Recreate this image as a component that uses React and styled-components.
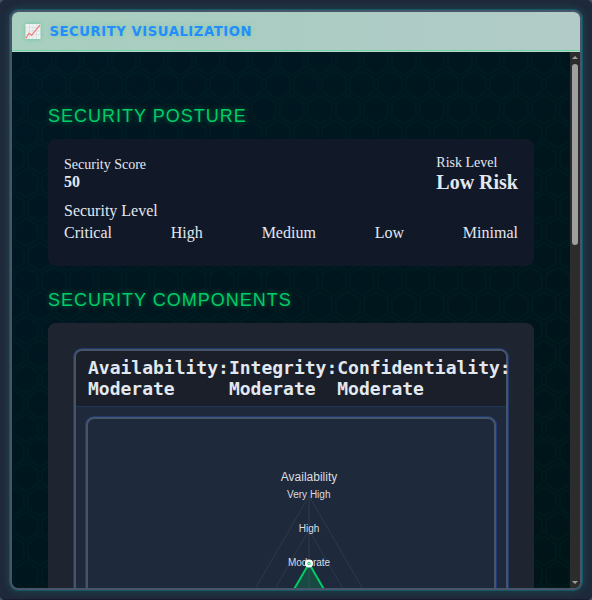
import React from 'react';
import styled, { createGlobalStyle } from 'styled-components';

const hexPath =
  'M13.99 9.25l13 7.5v15l-13 7.5L1 31.75v-15l12.99-7.5zM3 17.9v12.7l10.99 6.34 11-6.35V17.9l-11-6.34L3 17.9zM0 15l12.98-7.5V0h-2v6.35L0 12.69v2.3zm0 18.5L12.98 41v8h-2v-6.85L0 35.81v-2.3zM15 0v7.5L27.99 15H28v-2.31h-.01L17 6.35V0h-2zm0 49v-8l12.99-7.5H28v2.31h-.01L17 42.15V49h-2z';
const hexTile = encodeURIComponent(
  `<svg xmlns="http://www.w3.org/2000/svg" width="28" height="49"><path fill="#00cc66" fill-opacity="0.025" fill-rule="evenodd" d="${hexPath}"/></svg>`
);

const GlobalStyle = createGlobalStyle`
  * { box-sizing: border-box; }
  body { margin: 0; background: #475569; overflow: hidden; }
`;

const Page = styled.main`
  height: 600px;
  padding: 10px;
  border-radius: 5px;
  background: #1e293b;
  box-shadow: inset 0 -1px 0 #1c1c31;
  font-family: 'Liberation Serif', serif;
  color: #e2e8f0;
`;

const Window = styled.section`
  display: flex;
  flex-direction: column;
  height: 580px;
  border: 2px solid #475569;
  border-radius: 8px;
  overflow: hidden;
  background: url("data:image/svg+xml,${hexTile}"), linear-gradient(135deg, #001824, #001418);
  background-origin: padding-box;
  box-shadow: 0 0 0 1px rgba(14, 116, 144, 0.5), 0 0 10px rgba(32, 130, 100, 0.42);
`;

const TitleBar = styled.header`
  display: flex;
  align-items: center;
  flex: none;
  gap: 8px;
  height: 40px;
  padding: 0 12px 2px;
  background: linear-gradient(90deg, #a8cfbf, #abccc3 50%, #b2cbc8);
  box-shadow: inset 0 -1px 0 #b5d9cc, inset 0 -2px 0 #6dd3a3;
  font: bold 13.2px/20px 'DejaVu Sans', sans-serif;
  letter-spacing: 0.55px;
  color: #258cff;
  text-shadow: 0 0 5px rgba(0, 204, 102, 0.3);
`;

const TitleText = styled.span`
  padding-top: 2px;
`;

const ChartIcon = styled.svg`
  width: 18px;
  height: 18px;
  margin-right: -0.5px;
  filter: drop-shadow(0 0 2px rgba(0, 180, 90, 0.4));
`;

const Viewport = styled.div`
  display: flex;
  flex: 1;
  min-height: 0;
`;

const Content = styled.div`
  flex: 1;
  min-width: 0;
  padding: 51px 36px 0;
  overflow: hidden;
`;

const ScrollTrack = styled.div`
  display: flex;
  flex-direction: column;
  align-items: center;
  justify-content: space-between;
  width: 10px;
  background: #2c2c2c;
`;

const ScrollThumb = styled.div`
  width: 6px;
  height: 181px;
  border-radius: 3px;
  background: #9f9f9f;
`;

const Arrow = styled.svg`
  display: block;
  width: 10px;
  height: 12px;
`;

const ScrollTop = styled.div`
  display: flex;
  flex-direction: column;
  align-items: center;
`;

const Heading = styled.h2`
  height: 26px;
  margin: 0 0 10px;
  font: 400 18px/26px 'Liberation Sans', sans-serif;
  letter-spacing: 1px;
  color: #00cc66;
  text-shadow: 0 0 5px rgba(0, 204, 102, 0.5);
`;

const PostureCard = styled.div`
  height: 127px;
  margin-bottom: 21px;
  padding: 16px;
  border-radius: 8px;
  background: #111827;
`;

const SplitRow = styled.div`
  display: flex;
  justify-content: space-between;
  align-items: center;
`;

const Metric = styled.div`
  font-size: 14px;
  line-height: 16px;
`;

const MetricValue = styled.div`
  padding-bottom: ${({ $large }) => ($large ? 0 : 2)}px;
  font-size: ${({ $large }) => ($large ? 20 : 16)}px;
  line-height: ${({ $large }) => ($large ? 23 : 17)}px;
  font-weight: bold;
`;

const LevelLabel = styled.div`
  margin: 8px 0 4px;
  font-size: 16px;
  line-height: 18px;
`;

const Levels = styled(SplitRow)`
  font-size: 16px;
  line-height: 18px;
`;

const ComponentsCard = styled.div`
  height: 520px;
  padding: 26px;
  border-radius: 8px;
  background: #1f2530;
`;

const RadarFrame = styled.div`
  height: 480px;
  border: 2px solid #475569;
  border-radius: 8px;
  background: #1e293b;
  box-shadow: 0 0 0 1px rgba(37, 99, 235, 0.32);
`;

const RatingBar = styled.div`
  display: flex;
  height: 56px;
  padding: 6px 12px 0;
  border-radius: 6px 6px 0 0;
  border-bottom: 1px solid #1d3557;
  background: #1b1f29;
  font: bold 18px/21px 'DejaVu Sans Mono', monospace;
  color: #e2e8f0;
`;

const Rating = styled.div`
  flex: none;
`;

const ChartPanel = styled.div`
  height: 400px;
  margin: 10px;
  border: 2px solid #475569;
  border-radius: 8px;
  background: #1e293b;
  box-shadow: 0 0 0 1px rgba(37, 99, 235, 0.32);
`;

const Radar = styled.svg`
  display: block;
  width: 406px;
  height: 300px;
  font-family: 'Liberation Sans', sans-serif;
  font-size: 10px;
  fill: #d9dde2;
`;

const ratings = ['Availability:', 'Integrity:', 'Confidentiality:'];

export default function App() {
  return (
    <Page>
      <GlobalStyle />
      <Window>
        <TitleBar>
          <ChartIcon viewBox="0 0 18 18">
            <rect x="1.5" y="2" width="15" height="15" fill="#f0f1f2" />
            <path
              d="M2 5.5h14M2 9h14M2 12.5h14M5.5 2v15M9 2v15M12.5 2v15"
              stroke="#d3dcdd"
              strokeWidth="0.7"
            />
            <path d="M1.8 16.3L5 11.3l2.5 2L16 3" fill="none" stroke="#ed8585" strokeWidth="1.3" />
          </ChartIcon>
          <TitleText>SECURITY VISUALIZATION</TitleText>
        </TitleBar>
        <Viewport>
          <Content>
            <Heading>SECURITY POSTURE</Heading>
            <PostureCard>
              <SplitRow>
                <Metric>
                  Security Score
                  <MetricValue>50</MetricValue>
                </Metric>
                <Metric>
                  Risk Level
                  <MetricValue $large>Low Risk</MetricValue>
                </Metric>
              </SplitRow>
              <LevelLabel>Security Level</LevelLabel>
              <Levels>
                {['Critical', 'High', 'Medium', 'Low', 'Minimal'].map((l) => (
                  <span key={l}>{l}</span>
                ))}
              </Levels>
            </PostureCard>
            <Heading>SECURITY COMPONENTS</Heading>
            <ComponentsCard>
              <RadarFrame>
                <RatingBar>
                  {ratings.map((r) => (
                    <Rating key={r}>
                      {r}
                      <br />
                      Moderate
                    </Rating>
                  ))}
                </RatingBar>
                <ChartPanel>
                  <Radar viewBox="88 419 406 300" textAnchor="middle">
                    <g fill="none" stroke="#2e3a49">
                      <path d="M309 496V664M309 496L163 748H455Z" />
                      <path d="M309 530L192 732H426Z" />
                    </g>
                    <text x="309" y="480.5" fontSize="12">Availability</text>
                    <text x="308.8" y="498">Very High</text>
                    <text x="309" y="532">High</text>
                    <text x="309" y="566">Moderate</text>
                    <path
                      d="M309 563.5L250 665H368Z"
                      fill="rgba(0,204,102,0.2)"
                      stroke="#00cc66"
                      strokeWidth="2"
                    />
                    <circle cx="309" cy="563.5" r="4" fill="#fff" />
                    <circle cx="309" cy="563.5" r="1.7" fill="#25ce79" />
                    <path d="M308 563.5h2" stroke="#fff" strokeWidth="0.6" />
                  </Radar>
                </ChartPanel>
              </RadarFrame>
            </ComponentsCard>
          </Content>
          <ScrollTrack>
            <ScrollTop>
              <Arrow viewBox="0 0 10 12"><path d="M2 7L5 4L8 7Z" fill="#9f9f9f" /></Arrow>
              <ScrollThumb />
            </ScrollTop>
            <Arrow viewBox="0 0 10 12"><path d="M2 5L5 8L8 5Z" fill="#9f9f9f" /></Arrow>
          </ScrollTrack>
        </Viewport>
      </Window>
    </Page>
  );
}
